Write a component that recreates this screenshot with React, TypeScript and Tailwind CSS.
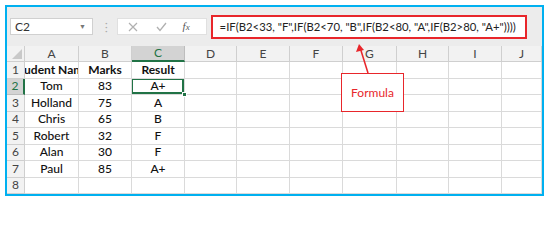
import React from "react";

const cols = ["A", "B", "C", "D", "E", "F", "G", "H", "I", "J"];
const widths = ["w-[54px]", "w-[53px]", "w-[53px]", "w-[52px]", "w-[53px]", "w-[53px]", "w-[54px]", "w-[52px]", "w-[53px]", "flex-1"];
const rows: string[][] = [
  ["Student Name", "Marks", "Result"],
  ["Tom", "83", "A+"],
  ["Holland", "75", "A"],
  ["Chris", "65", "B"],
  ["Robert", "32", "F"],
  ["Alan", "30", "F"],
  ["Paul", "85", "A+"],
  ["", "", ""],
];

export default function App() {
  return (
    <div className="w-[553px] h-[205px] bg-white relative overflow-hidden" style={{ fontFamily: "Lato, 'Liberation Sans', sans-serif" }}>
      <div className="absolute left-[5px] top-[5px] w-[539px] h-[191px] border-2 border-[#00b0f0] bg-white overflow-hidden flex flex-col">
        {/* formula band */}
        <div className="h-[39px] bg-[#ececec] flex items-start shrink-0">
          <div className="mt-[11px] ml-[3px] w-[83px] h-[17px] bg-white border border-[#d0d0d0] flex items-center justify-between px-[4px]">
            <span className="text-[12px] text-[#333]">C2</span>
            <span className="text-[7px] text-[#777] mr-[2px]">▼</span>
          </div>
          <div className="mt-[13px] ml-[12px] text-[10px] leading-[4px] text-[#aaa] flex flex-col items-center">
            <span>·</span>
            <span>·</span>
            <span>·</span>
          </div>
          <div className="mt-[11px] ml-[9px] w-[90px] h-[17px] bg-white border border-[#e0e0e0] flex items-center">
            <svg width="10" height="10" viewBox="0 0 10 10" className="ml-[10px]">
              <path d="M1 1L9 9M9 1L1 9" stroke="#b0b0b0" strokeWidth="1.2" />
            </svg>
            <svg width="11" height="10" viewBox="0 0 11 10" className="ml-[18px]">
              <path d="M1 5L4 8.5L10 1" stroke="#b0b0b0" strokeWidth="1.3" fill="none" />
            </svg>
            <span className="ml-[16px] text-[11px] italic text-[#555]" style={{ fontFamily: "'Liberation Serif', serif" }}>
              f<span className="text-[9px]">x</span>
            </span>
          </div>
          <div className="mt-[8px] ml-[4px] w-[316px] h-[24px] bg-white border-2 border-[#e8262b] flex items-center pl-[7px] overflow-hidden">
            <span className="text-[11.3px] text-[#222] whitespace-nowrap">
              =IF(B2&lt;33, "F",IF(B2&lt;70, "B",IF(B2&lt;80, "A",IF(B2&gt;80, "A+"))))
            </span>
          </div>
        </div>
        {/* header row */}
        <div className="h-[16px] flex shrink-0">
          <div className="w-[18px] bg-[#f2f2f2] border-r border-b border-[#cfcfcf] relative">
            <svg width="10" height="10" viewBox="0 0 10 10" className="absolute right-[2px] bottom-[2px]">
              <path d="M10 0L10 10L0 10Z" fill="#c9c9c9" />
            </svg>
          </div>
          {cols.map((c, ci) => (
            <div
              key={c}
              className={
                widths[ci] +
                (c === "C"
                  ? " bg-[#d3d3d3] border-r border-b-2 border-r-[#bdbdbd] border-b-[#217346] flex items-center justify-center text-[12px] leading-none text-[#217346]"
                  : " bg-[#f2f2f2] border-r border-b border-[#cfcfcf] flex items-center justify-center text-[12px] leading-none text-[#444]")
              }
            >
              {c}
            </div>
          ))}
        </div>
        {rows.map((r, ri) => (
          <div key={ri} className="h-[16.5px] flex shrink-0">
            <div
              className={
                ri === 1
                  ? "w-[18px] bg-[#d3d3d3] border-r-2 border-b border-r-[#217346] border-b-[#bdbdbd] flex items-center justify-center text-[12px] leading-none text-[#217346]"
                  : "w-[18px] bg-[#f2f2f2] border-r border-b border-[#cfcfcf] flex items-center justify-center text-[12px] leading-none text-[#444]"
              }
            >
              {String(ri + 1)}
            </div>
            {cols.map((c, ci) => {
              const v = ci < 3 ? r[ci] : "";
              const bold = ri === 0;
              const sel = ri === 1 && ci === 2;
              return (
                <div
                  key={c}
                  className={
                    widths[ci] +
                    " border-r border-b border-[#dadada] flex items-center justify-center overflow-hidden whitespace-nowrap text-[12px] leading-none text-[#111] relative " +
                    (bold ? "font-bold" : "font-medium")
                  }
                >
                  {v}
                  {sel && (
                    <div className="absolute left-[-1px] top-[-1px] right-0 bottom-0 border-2 border-[#217346]" />
                  )}
                </div>
              );
            })}
          </div>
        ))}
      </div>
      {/* fill handle of selected cell */}
      <div className="absolute left-[182px] top-[92px] w-[5px] h-[5px] bg-[#217346] border border-white" />
      {/* callout */}
      <svg className="absolute left-0 top-0" width="553" height="205" viewBox="0 0 553 205">
        <path d="M368 73L360.5 49" stroke="#e8262b" strokeWidth="1.6" />
        <path d="M359 44L356 52L364 50Z" fill="#e8262b" />
      </svg>
      <div className="absolute left-[341px] top-[73px] w-[63px] h-[39px] bg-white border border-[#e8262b] flex items-center justify-center">
        <span className="text-[12px] text-[#e8262b]">Formula</span>
      </div>
    </div>
  );
}
